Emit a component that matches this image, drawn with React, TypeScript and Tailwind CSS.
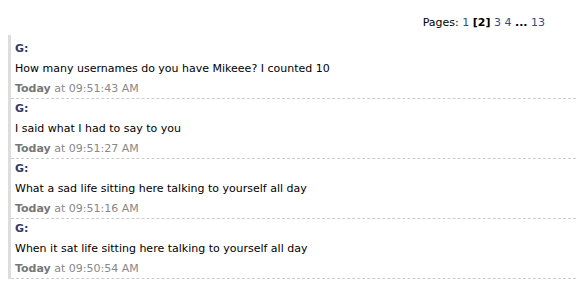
import React from "react";

const posts = [
  { text: "How many usernames do you have Mikeee? I counted 10", time: "09:51:43 AM" },
  { text: "I said what I had to say to you", time: "09:51:27 AM" },
  { text: "What a sad life sitting here talking to yourself all day", time: "09:51:16 AM" },
  { text: "When it sat life sitting here talking to yourself all day", time: "09:50:54 AM" },
];

export default function App() {
  return (
    <div
      className="w-[576px] h-[283px] bg-white overflow-hidden text-[11px] leading-[14px]"
      style={{ fontFamily: '"DejaVu Sans", Verdana, sans-serif' }}
    >
      <div className="flex justify-end pr-[31px] pt-[16px] h-[35px] text-black">
        <span>
          Pages: <span className="text-[#334d80]">1</span> <b>[2]</b>{" "}
          <span className="text-[#334d80]">3</span> <span className="text-[#334d80]">4</span>{" "}
          <b>...</b> <span className="text-[#334d80]">13</span>
        </span>
      </div>
      <div className="ml-[8px] border-l-[3px] border-[#dddddd] pt-[4px]">
        {posts.map((p, i) => (
          <div key={i} className="h-[60px] border-b border-dashed border-[#cccccc] pl-[4px] pt-[3px]">
            <div className="font-bold text-[#2f3a66] h-[20px]">G:</div>
            <div className="text-black h-[20px]">{p.text}</div>
            <div className="text-[#888888]">
              <b className="text-[#777777]">Today</b> at {p.time}
            </div>
          </div>
        ))}
      </div>
    </div>
  );
}
